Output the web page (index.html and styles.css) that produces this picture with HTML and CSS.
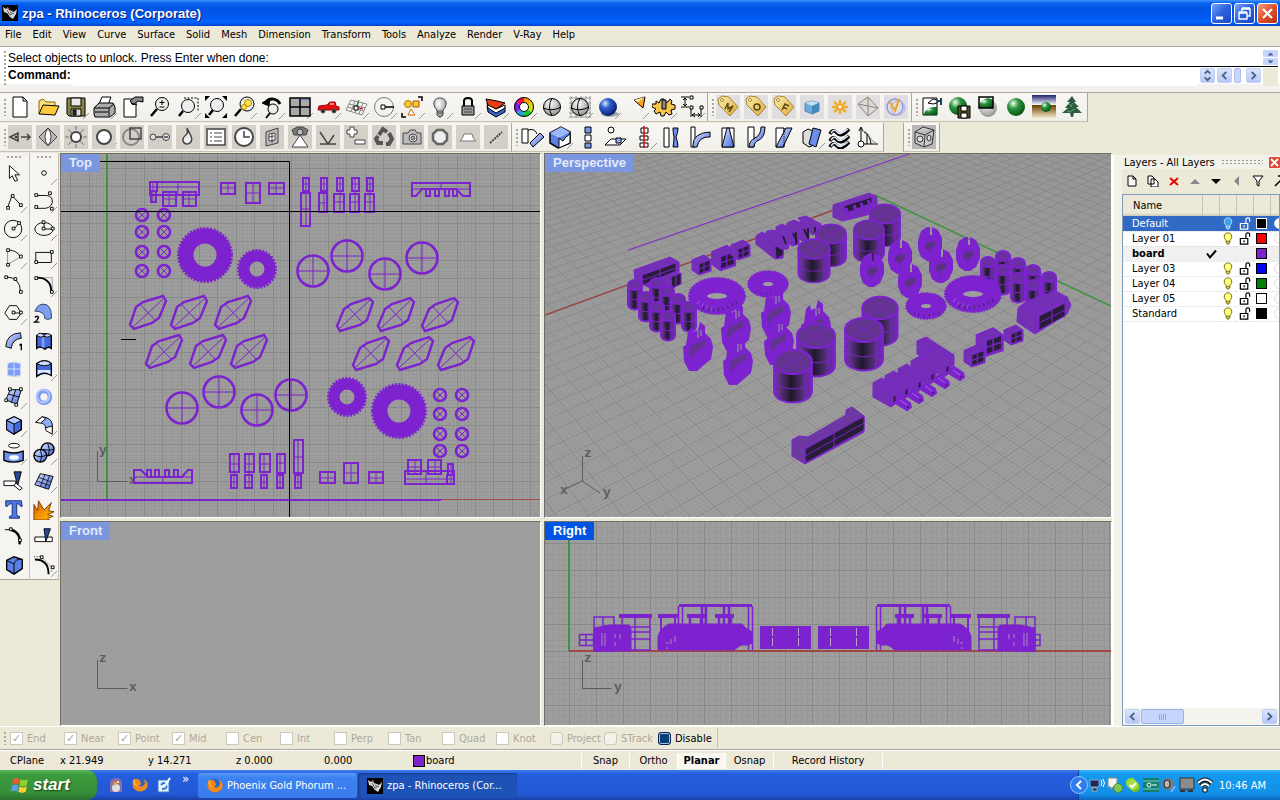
FILE: index.html
```html
<!DOCTYPE html>
<html lang="en">
<head>
    <meta charset="UTF-8">
    <meta name="viewport" content="width=device-width, initial-scale=1.0">
    <title>zpa - Rhinoceros (Corporate)</title>
    <link rel="stylesheet" href="styles.css">
</head>
<body>

    <!-- shared gradients and symbols -->
    <svg class="defs" width="0" height="0" aria-hidden="true">
        <defs>
            <linearGradient id="gBlue" x1="0" y1="0" x2="1" y2="1"><stop offset="0" stop-color="#dbe6ff"/><stop offset="1" stop-color="#4468dd"/></linearGradient>
            <radialGradient id="gBall" cx=".35" cy=".3" r=".75"><stop offset="0" stop-color="#dfe9ff"/><stop offset=".35" stop-color="#2f5fd0"/><stop offset="1" stop-color="#021a66"/></radialGradient>
            <radialGradient id="gGreen" cx=".35" cy=".3" r=".75"><stop offset="0" stop-color="#f0fff0"/><stop offset=".4" stop-color="#2b9440"/><stop offset="1" stop-color="#04520f"/></radialGradient>
            <radialGradient id="gGray" cx=".4" cy=".3" r=".75"><stop offset="0" stop-color="#fff"/><stop offset="1" stop-color="#8c8c8c"/></radialGradient>
            <linearGradient id="gTag" x1="0" y1="0" x2="1" y2="1"><stop offset="0" stop-color="#fff0b0"/><stop offset="1" stop-color="#d9a83a"/></linearGradient>
            <linearGradient id="gFire" x1="0" y1="0" x2="1" y2="1"><stop offset="0" stop-color="#e85a00"/><stop offset="1" stop-color="#ffc400"/></linearGradient>
            <linearGradient id="gSky" x1="0" y1="0" x2="0" y2="1"><stop offset="0" stop-color="#1b2070"/><stop offset=".42" stop-color="#fff"/><stop offset=".43" stop-color="#6b4400"/><stop offset="1" stop-color="#fff6e0"/></linearGradient>
            <linearGradient id="gCyl" x1="0" x2="1"><stop offset="0" stop-color="#7a22cc"/><stop offset=".12" stop-color="#63348f"/><stop offset=".45" stop-color="#1e1828"/><stop offset=".8" stop-color="#5a3183"/><stop offset="1" stop-color="#7a22cc"/></linearGradient>

            <symbol id="rhino" viewBox="0 0 16 16"><rect width="16" height="16" fill="#000"/><path d="M1 2l3 2 2-2 1 3 3 1 2 1 3-3-1 5-3 5-3-2-3-4-3-1z" fill="#d8d8d8"/><path d="M5 5l3 5 2-1M8 7l4 2" stroke="#555" fill="none"/><path d="M5 3l2 1" stroke="#c33"/></symbol>
            <symbol id="firefox" viewBox="0 0 16 16"><circle cx="8" cy="8" r="7" fill="#2b62c4"/><path d="M4 2c2 0 5 1 4 3 2 1 1 3-1 3 2 3 5 1 6-2 0-2-1-3-2-4 5 1 6 7 3 10-4 4-11 3-13-2C0 7 1 3 2 2z" fill="#f08a1c"/><path d="M2 3c0 3 1 5 3 6" stroke="#ffd24a" fill="none"/></symbol>
            <symbol id="bulb" viewBox="0 0 12 14"><path d="M4 9C1 7 1 1 6 1s5 6 2 8v3H4z" stroke="currentColor"/><path d="M4 10h4M5 13h2" stroke="currentColor" fill="none"/></symbol>
            <symbol id="lock" viewBox="0 0 12 14"><path d="M1 7h8v6H1zM7 7V3q0-2 2-2t2 2v2M5 9v2" fill="none" stroke="currentColor" stroke-width="1.3"/></symbol>

            <!-- plan view parts -->
            <g id="cap"><circle r="6" stroke-width="2.6"/><path class="thin" d="M-4-4l8 8M4-4l-8 8"/></g>
            <g id="ring"><circle r="15.5" stroke-width="2.6"/><path class="thin" d="M-15 0h30M0-15v30"/></g>
            <g id="fuse"><path d="M-18 12l6-18 7-5 20-6 3 5-7 17-7 5-18 6z" stroke-width="2.4"/><path class="thin" d="M-15 14L15-14M-8-9l16 17"/></g>
            <g id="gearBig"><circle r="19" stroke-width="15"/><circle r="26.5" stroke-width="3" stroke-dasharray="2 1.4"/></g>
            <g id="gearSmall"><circle r="13" stroke-width="11"/><circle r="18.5" stroke-width="3" stroke-dasharray="2 1.4"/></g>
            <g id="halfBoard">
                <path stroke-width="2" d="M150 182h49v13h-49zM150 182h7v9h-7zM151 191h5v11h-5zM163 192h13v14h-13zM183 192h13v14h-13zM221 183h14v11h-14zM246 183h14v20h-14zM269 183h15v11h-15z"/>
                <path class="thin" d="M153 182v20M150 187h49M178 182v13M163 199h13M183 199h13M169 192v14M189 192v14M221 188h14M228 183v11M246 193h14M253 183v20M269 188h15M276 183v11"/>
                <path stroke-width="2" d="M303 178h6v13h-6zM321 178h6v13h-6zM337 178h6v13h-6zM352 178h7v13h-7zM367 178h6v13h-6zM301 193h9v33h-9zM319 193h8v19h-8zM334 194h10v18h-10zM350 194h9v18h-9zM365 194h9v18h-9z"/>
                <path class="thin" d="M303 184h6M321 184h6M337 184h6M352 184h7M367 184h6M306 178v48M324 178v34M340 178v34M355 178v34M370 178v34M301 209h9M319 203h8M334 202h10M350 202h9M365 202h9"/>
                <path stroke-width="2" d="M412 183h58v13h-7l-7-7h-34l-6 7h-4z"/>
                <path class="thin" d="M412 189h58M441 183v6"/>
                <path stroke-width="2" d="M426 190v6h4v-6M435 190v6h4v-6M445 190v6h4v-6M453 190v6h4v-6"/>
                <use href="#cap" x="142" y="215"/><use href="#cap" x="164" y="215"/>
                <use href="#cap" x="142" y="232"/><use href="#cap" x="164" y="232"/>
                <use href="#cap" x="142" y="252"/><use href="#cap" x="164" y="252"/>
                <use href="#cap" x="142" y="271"/><use href="#cap" x="164" y="271"/>
                <use href="#gearBig" x="205" y="255"/><use href="#gearSmall" x="257" y="269"/>
                <use href="#ring" x="313" y="271"/><use href="#ring" x="347" y="256"/><use href="#ring" x="385" y="274"/><use href="#ring" x="422" y="258"/>
                <use href="#fuse" x="148" y="313"/><use href="#fuse" x="189" y="313"/><use href="#fuse" x="233" y="313"/>
                <use href="#fuse" x="164" y="352"/><use href="#fuse" x="208" y="352"/><use href="#fuse" x="249" y="352"/>
            </g>

            <!-- perspective parts, origin at the middle of the top face -->
            <g id="can"><path d="M-19 0v30c2 14 36 14 38 0V0" fill="url(#gCyl)" stroke-width="1.8"/><path d="M-19 17c4 13 34 13 38 0M12 8v30" fill="none"/><ellipse rx="19" ry="12" fill="#63348f" stroke-width="2.2"/><path d="M-14-8L14 8M13-8L-13 8" fill="none" stroke-width=".8"/></g>
            <g id="capsule"><path d="M-7 0v20c2 6 12 6 14 0V0" fill="url(#gCyl)" stroke-width="2"/><path d="M-7 11c3 5 11 5 14 0M3 5v18" fill="none"/><ellipse rx="7" ry="5" fill="#6a2fa3" stroke-width="2"/></g>
            <g id="fin"><path d="M-15 0l3-2 2-14 4-4 1 5 5-2 2-8 5 4v7l6 6 2 8-2 12-14 12-8 0-5-10z" fill="#7c22ce" stroke="none"/><path d="M-9 7L-7-1 4-6 7-8v7L-3 5l-4 6z" fill="#63348f" stroke="none"/><path d="M0-9v-8M3-11v-6" stroke="#9e9e9e"/></g>
            <g id="disc"><path d="M-12-4l3-9 6-4 3 0v8h2v-8l6 3 4 8v10l-4 9-6 4-5 0-6-4-3-8z" fill="#7c22ce" stroke="none"/><path d="M-5 0l4-2V-5l2 3 4-1v5L1 4l-1 7-1-6-4 0z" fill="#5a3183" stroke="none"/></g>
            <g id="torusBig"><ellipse rx="28" ry="18" fill="#7c22ce" stroke-width="2" stroke-dasharray="2 1"/><ellipse rx="10" ry="3" fill="#9e9e9e" stroke="none"/><path d="M-19 6q7 6 18 7" fill="none" stroke="#9a55dc" stroke-width="4" stroke-dasharray="1 4"/><path d="M-14 12q18 6 37-8" fill="none" stroke="#45266b" stroke-width="4" stroke-dasharray="1 4"/></g>
            <g id="torusSmall"><ellipse rx="20" ry="13" fill="#7c22ce" stroke-width="1.5" stroke-dasharray="2 1"/><ellipse rx="5" ry="2" fill="#9e9e9e" stroke="none"/><path d="M-12 7q12 6 25-1" fill="none" stroke="#45266b" stroke-width="2" stroke-dasharray="1 4"/></g>
            <g id="block"><path d="M-9-5l12-5 7 5V6L-2 10l-7-5z" fill="#7330b4"/><path d="M-2-1l11-4V5L-2 9z" fill="#281d36"/><path d="M-2 4l11-4M3-3V7" fill="none"/></g>
            <g id="pin"><path d="M-19-13l9-5L6-6v12l-7 5-18-10z" fill="#7330b4"/><path d="M-16-10L2 1M-12-14L3-4M-1 0v10" fill="none" stroke-width=".8"/><path d="M1 1l3-2v6l-3 2z" fill="#281d36"/><path d="M5 4l4-3 9 6 1 4-4 3-10-6z" fill="#7c22ce" stroke-width="2"/><path d="M8 4l7 5" stroke="#a06ae0"/><path d="M15 11h2" stroke="#281d36"/></g>
        </defs>
    </svg>

    <header class="title-bar">
        <svg class="app-icon"><use href="#rhino"/></svg>
        <h1>zpa - Rhinoceros (Corporate)</h1>
        <button class="win-btn" aria-label="Minimize"><svg viewBox="0 0 19 19"><path d="M4 14h7" stroke="#fff" stroke-width="3"/></svg></button>
        <button class="win-btn" aria-label="Restore"><svg viewBox="0 0 19 19"><path d="M7 7V5h8v7h-3M7 4h8M4 9h8v6H4zM4 8h8" stroke="#fff" stroke-width="1.4" fill="none"/></svg></button>
        <button class="win-btn close" aria-label="Close"><svg viewBox="0 0 19 19"><path d="M5 5l9 9M14 5l-9 9" stroke="#fff" stroke-width="2.2"/></svg></button>
    </header>

    <nav class="menu-bar">
        <a href="#">File</a><a href="#">Edit</a><a href="#">View</a><a href="#">Curve</a><a href="#">Surface</a><a href="#">Solid</a><a href="#">Mesh</a><a href="#">Dimension</a><a href="#">Transform</a><a href="#">Tools</a><a href="#">Analyze</a><a href="#">Render</a><a href="#">V-Ray</a><a href="#">Help</a>
    </nav>

    <section class="command">
        <i class="grip"></i>
        <div class="command-lines">
            <div class="history">
                <p>Select objects to unlock. Press Enter when done:</p>
                <span class="spin"><button aria-label="Scroll up"><svg viewBox="0 0 8 4"><path d="M2 3l2-2 2 2z" fill="#4d6185"/></svg></button><button aria-label="Scroll down"><svg viewBox="0 0 8 4"><path d="M2 1l2 2 2-2z" fill="#4d6185"/></svg></button></span>
            </div>
            <div class="prompt">
                <label for="cmd">Command:</label>
                <input id="cmd" type="text">
                <button class="sb" aria-label="Lines"><svg viewBox="0 0 14 14"><path d="M4 5l3-3 3 3M4 9l3 3 3-3" stroke="#4d6185" stroke-width="2" fill="none"/></svg></button>
                <button class="sb" aria-label="Left"><svg viewBox="0 0 14 14"><path d="M9 3L5 7l4 4" stroke="#4d6185" stroke-width="2" fill="none"/></svg></button>
                <i class="thumb"></i>
                <button class="sb" aria-label="Right"><svg viewBox="0 0 14 14"><path d="M5 3l4 4-4 4" stroke="#4d6185" stroke-width="2" fill="none"/></svg></button>
                <i class="corner"></i>
            </div>
        </div>
    </section>

    <div class="toolbars">
        <div class="bar">
            <div class="tools">
                <i class="grip"></i>
                <button aria-label="New"><svg viewBox="0 0 24 24"><path d="M5 2h10l4 4v16H5zM15 2v4h4" fill="#fff"/></svg></button>
                <button aria-label="Open"><svg viewBox="0 0 24 24"><path d="M3 19V6l4-2 3 3h9v4" fill="#ffe27a" stroke="#8a6500"/><path d="M3 19l4-9 16 1-4 9z" fill="#ffc83d"/></svg></button>
                <button class="fly" aria-label="Save"><svg viewBox="0 0 24 24"><path d="M3 3h18v18H5l-2-2z" fill="#8a8446"/><path d="M7 3h10v8H7z" fill="#e8e8e8"/><path d="M7 14h10v7H7z" fill="#ddd"/><path d="M9 15h3v5H9z" fill="#333"/></svg></button>
                <button class="fly" aria-label="Print"><svg viewBox="0 0 24 24"><path d="M7 9l3-7h9l-3 8z" fill="#fff"/><path d="M2 13l5-5h14l2 4v6l-5 4H3l-1-3z" fill="#aaa"/><path d="M2 13h15l5-4M3 17h13M17 13v8" fill="none"/></svg></button>
                <button aria-label="Properties"><svg viewBox="0 0 24 24"><path d="M4 4h12v18H4z" fill="#fff"/><path d="M10 6l5-4h8v5l-5-1-5 4z" fill="#888"/><path d="M11 8l6 2"/></svg></button>
                <button aria-label="Zoom"><svg viewBox="0 0 24 24"><circle cx="14" cy="9" r="6.5" fill="#eee"/><path d="M9 14l-6 7" stroke-width="2.5"/><path d="M14 5v5M11.5 7.5h5M11.5 12h5"/></svg></button>
                <button class="fly" aria-label="Zoom window"><svg viewBox="0 0 24 24"><path d="M8 3h14v14" stroke-dasharray="2 1.5" fill="none"/><circle cx="12" cy="11" r="6.5" fill="#eee"/><path d="M7 16l-4 5" stroke-width="2.5"/></svg></button>
                <button aria-label="Zoom extents"><svg viewBox="0 0 24 24"><circle cx="13" cy="10" r="6.5" fill="#eee"/><path d="M9 15l-4 5" stroke-width="2.5"/><path d="M1 1h5L1 6zM23 1v5l-5-5zM23 23h-5l5-5zM1 23v-5l5 5z" fill="#000" stroke="none"/></svg></button>
                <button class="fly" aria-label="Zoom selected"><svg viewBox="0 0 24 24"><circle cx="15" cy="9" r="7" fill="#eee"/><circle cx="16" cy="8" r="3.5" fill="#ffe14a" stroke="#b98c00"/><circle cx="12" cy="12" r="2.5" fill="#ffe14a" stroke="#b98c00"/><path d="M9 14l-6 7" stroke-width="2.5"/></svg></button>
                <button class="fly" aria-label="Undo view"><svg viewBox="0 0 24 24"><path d="M20 9C17 3 10 3 7 6" stroke-width="3" fill="none"/><path d="M2 8l8-5-1 8z" fill="#000"/><circle cx="13" cy="14" r="5" fill="#eee"/><path d="M10 18l-4 5" stroke-width="2"/></svg></button>
                <button class="fly" aria-label="Four views"><svg viewBox="0 0 24 24"><path d="M2 3h20v18H2z" fill="#aaa" stroke-width="1.5"/><path d="M12 3v18M2 12h20" stroke-width="1.5"/><path d="M12 4h9" stroke="#2848a0"/></svg></button>
                <button class="fly" aria-label="Right view"><svg viewBox="0 0 24 24"><path d="M2 15l1-4 8-1 3-3h5l1 4 3 1v3z" fill="#e01010" stroke="#a00"/><circle cx="7" cy="16" r="2" fill="#222" stroke="#555"/><circle cx="18" cy="16" r="2" fill="#222" stroke="#555"/><path d="M14 9h4" stroke="#fff"/></svg></button>
                <button class="fly" aria-label="Set CPlane"><svg viewBox="0 0 24 24"><path d="M7 5l16 4-5 11-16-5zM11 6L7 17M15 7l-4 11M19 8l-4 11M5 9l16 4M4 12l16 4" fill="none" stroke="#888"/><path d="M12 12l3-7" stroke="#080"/><path d="M12 12l7 2" stroke="#c00"/><path d="M10 11h4v4h-4z" fill="#fff"/></svg></button>
                <button class="fly" aria-label="Circle"><svg viewBox="0 0 24 24"><circle cx="12" cy="12" r="9.5" fill="none" stroke="#777"/><path d="M9 10h4v4H9z" fill="#fff"/><path d="M13 12h9" stroke-width="1.5"/></svg></button>
                <button class="fly" aria-label="Object snap"><svg viewBox="0 0 24 24"><path d="M18 2h4v4M2 18v4h4" fill="none" stroke-width="1.5"/><circle cx="8" cy="9" r="3.5" fill="#ffc62e" stroke="#a70"/><path d="M13 6h6v6h-6z" fill="#ffc62e" stroke="#a50"/><path d="M11 14l4 6H8z" fill="#fff" stroke="#c60"/></svg></button>
                <button class="fly" aria-label="Hide"><svg viewBox="0 0 24 24"><path d="M9 15C4 10 5 3 12 3s8 7 3 12v5l-2 2h-2l-2-2z" fill="url(#gGray)" stroke="#444"/><path d="M9 16h6M9 18h6" stroke="#444"/></svg></button>
                <button class="fly" aria-label="Lock"><svg viewBox="0 0 24 24"><path d="M8 11V6q0-3 4-3t4 3v5" fill="none" stroke-width="2"/><path d="M6 11h12v9H6z" fill="#999"/><path d="M8 14h8M8 17h8" stroke="#444"/></svg></button>
                <button class="fly" aria-label="Layers"><svg viewBox="0 0 24 24"><path d="M3 11l9 6 9-5v5l-9 5-8-5z" fill="#3862cc"/><path d="M3 8l9 6 9-4v3l-9 5-8-5z" fill="#fff"/><path d="M2 4l11 2 8 2-9 6-8-4z" fill="#f03c14"/></svg></button>
                <button class="fly" aria-label="Colors"><svg viewBox="0 0 24 24"><g fill="none" stroke-width="5"><path d="M12 5a7 7 0 0 1 6 3" stroke="#ff9c00"/><path d="M18 8a7 7 0 0 1 0 8" stroke="#d8e000"/><path d="M18 16a7 7 0 0 1-6 3" stroke="#18c830"/><path d="M12 19a7 7 0 0 1-6-3" stroke="#20a0e0"/><path d="M6 16a7 7 0 0 1 0-8" stroke="#8020e0"/><path d="M6 8a7 7 0 0 1 6-3" stroke="#f01050"/></g><circle cx="12" cy="12" r="9.5" fill="none"/><circle cx="12" cy="12" r="4.5" fill="#fff"/></svg></button>
                <button aria-label="Shade"><svg viewBox="0 0 24 24"><circle cx="12" cy="12" r="8.5" fill="url(#gGray)"/><path d="M12 3q-5 9 0 18M3 13q9 4 18-1" fill="none"/></svg></button>
                <button class="fly" aria-label="Shaded viewport"><svg viewBox="0 0 24 24"><path d="M1 3h22M1 8h22M1 13h22M1 18h22M1 22h22M3 1v22M8 1v22M13 1v22M18 1v22M22 1v22" stroke="#888" stroke-width=".8"/><circle cx="12" cy="12" r="8.5" fill="url(#gGray)"/><path d="M12 3q-5 9 0 18M3 13q9 4 18-1" fill="none"/></svg></button>
                <button class="fly" aria-label="Render"><svg viewBox="0 0 24 24"><ellipse cx="14" cy="19" rx="9" ry="3" fill="#aaa" stroke="none"/><circle cx="12" cy="12" r="9" fill="url(#gBall)" stroke="none"/></svg></button>
                <button class="fly" aria-label="Spotlight"><svg viewBox="0 0 24 24"><path d="M10 5l11-3-2 11z" fill="#ffa21c"/><path d="M10 5l11-3-7 5z" fill="#fff3b0" stroke="none"/></svg></button>
                <button class="fly" aria-label="Options"><svg viewBox="0 0 24 24"><path d="M4 6l3 2 2-4h3v3h4l2-3 2 2-1 3 4 1v4l-4 1 1 4-3 1-3-3-2 4h-3l-1-4-4 2-2-3 2-2-4-2V9h4z" fill="#f4c64a"/><path d="M10 5h4v9h-4z" fill="#888"/></svg></button>
                <button class="fly" aria-label="Dimensions"><svg viewBox="0 0 24 24"><path d="M1 2h8M1 12h8M5 3v8M3 5l2-2 2 2M3 9l2 2 2-2M11 14v8M21 14v8M12 20h8M15 18l-3 2 3 2M18 18l2 2-2 2" fill="none"/><path d="M10 1h3v3h-3zM10 11h3v3h-3zM20 11h3v3h-3z" fill="#fff"/></svg></button>
            </div>
            <div class="tools tinted">
                <i class="grip"></i>
                <button aria-label="V-Ray materials"><svg viewBox="0 0 24 24"><path d="M2 4l4-3 7 1 9 10-8 9L3 10z" fill="url(#gTag)" stroke="#a8842a"/><circle cx="6" cy="5" r="1.5" fill="#fff" stroke="#a8842a"/><path d="M9 14l3-6v6l5-3-4 6" fill="none" stroke="#5c4810" stroke-width="1.5"/></svg></button>
                <button aria-label="V-Ray options"><svg viewBox="0 0 24 24"><path d="M2 4l4-3 7 1 9 10-8 9L3 10z" fill="url(#gTag)" stroke="#a8842a"/><circle cx="6" cy="5" r="1.5" fill="#fff" stroke="#a8842a"/><circle cx="13" cy="12" r="3" fill="none" stroke="#5c4810" stroke-width="1.5"/></svg></button>
                <button aria-label="V-Ray frame buffer"><svg viewBox="0 0 24 24"><path d="M2 4l4-3 7 1 9 10-8 9L3 10z" fill="url(#gTag)" stroke="#a8842a"/><circle cx="6" cy="5" r="1.5" fill="#fff" stroke="#a8842a"/><path d="M10 15l3-6 4 2M11 12l4 2" fill="none" stroke="#5c4810" stroke-width="1.5"/></svg></button>
                <button aria-label="Proxy"><svg viewBox="0 0 24 24"><path d="M5 8l7-2 7 2v8l-7 3-7-3z" fill="#6fa9d6" stroke="#5287b5"/><path d="M5 8l7-2 7 2-7 3z" fill="#bfe0f5" stroke="none"/><path d="M12 11v8l7-3V8z" fill="#4889bd" stroke="none"/></svg></button>
                <button aria-label="Sun"><svg viewBox="0 0 24 24"><path d="M12 5v14M4 12h16M6 7l12 10M18 7L6 17" stroke="#f0ac28" stroke-width="2.5"/><circle cx="12" cy="12" r="2" fill="#fff" stroke="#f0ac28"/></svg></button>
                <button aria-label="Infinite plane"><svg viewBox="0 0 24 24"><path d="M2 9L12 2l10 11-10 8zM2 9l20 4M12 2v19" fill="#dddbd8" stroke="#8c8878"/></svg></button>
                <button aria-label="V-Ray"><svg viewBox="0 0 24 24"><circle cx="11" cy="12" r="8" fill="none" stroke="#8e98dc" stroke-width="1.5"/><circle cx="14" cy="13" r="7" fill="none" stroke="#aab2ea"/><path d="M6 7l5 9 4-12" stroke="#f0a520" stroke-width="2" fill="none"/></svg></button>
            </div>
            <div class="tools">
                <i class="grip"></i>
                <button aria-label="Material editor"><svg viewBox="0 0 24 24"><path d="M3 3h14v17H3z" fill="#fff"/><path d="M4 20q1-9 13-8v8z" fill="url(#gGreen)" stroke="none"/><path d="M8 8l5-4 4 1v3l-4 1z" fill="#fff"/><path d="M17 6h4V3v7" stroke="#146" stroke-width="2" fill="none"/></svg></button>
                <button aria-label="Save material"><svg viewBox="0 0 24 24"><circle cx="10" cy="11" r="9" fill="url(#gGreen)" stroke="none"/><path d="M10 11h12v12H10z" fill="#555522"/><path d="M13 11h6v5h-6zM13 18h6v5h-6z" fill="#fff"/></svg></button>
                <button aria-label="Region render"><svg viewBox="0 0 24 24"><circle cx="12" cy="13" r="9" fill="url(#gGray)" stroke="none"/><path d="M3 3h14v10H3z" fill="#fff" stroke="none"/><path d="M3 13a9 9 0 0 1 14-8v8z" fill="url(#gGreen)" stroke="none"/><path d="M3 2h14v11H3z" fill="none" stroke-width="1.5"/></svg></button>
                <button aria-label="Render sphere"><svg viewBox="0 0 24 24"><circle cx="12" cy="12" r="9" fill="url(#gGreen)" stroke="none"/></svg></button>
                <button aria-label="Environment"><svg viewBox="0 0 24 24"><path d="M0 0h24v24H0z" fill="url(#gSky)" stroke="none"/><circle cx="14" cy="12" r="5" fill="url(#gGreen)" stroke="none"/></svg></button>
                <button aria-label="Tree"><svg viewBox="0 0 24 24"><path d="M12 1l4 6h-2l5 5h-3l6 6h-8l-1 4h-2l-1-4H2l6-5H5l5-6H7z" fill="#2d5c40" stroke="none"/><path d="M9 9l3 3M15 14l-4 2M7 16l4 1M13 8l-2 3" stroke="#6f9a80"/></svg></button>
            </div>
        </div>
        <div class="bar">
            <div class="tools gray">
                <i class="grip"></i>
                <button aria-label="Show view"><svg viewBox="0 0 24 24"><path d="M2 12l8-4v8zM13 12h9M19 9l3 3-3 3" fill="none" stroke-width="1.5"/><circle cx="8" cy="12" r="1"/></svg></button>
                <button aria-label="Diamond"><svg viewBox="0 0 24 24"><path d="M3 12l9-9 9 9-9 9z" fill="#bbb"/><path d="M12 3q-6 9 0 18 6-9 0-18" fill="#fff"/></svg></button>
                <button aria-label="Sun light"><svg viewBox="0 0 24 24"><circle cx="12" cy="12" r="5" fill="#fff" stroke-width="2"/><path d="M12 1v4M12 19v4M1 12h4M19 12h4M4 4l4 4M16 16l4 4M20 4l-4 4M8 16l-4 4" stroke="#777"/></svg></button>
                <button class="fly" aria-label="Ring"><svg viewBox="0 0 24 24"><circle cx="12" cy="12" r="7" fill="#fff" stroke-width="2"/></svg></button>
                <button aria-label="Overlap"><svg viewBox="0 0 24 24"><circle cx="11" cy="12" r="8" fill="none" stroke="#888" stroke-width="2"/><path d="M10 3h11v11H10z" fill="none" stroke-width="1.5"/></svg></button>
                <button aria-label="Link"><svg viewBox="0 0 24 24"><circle cx="5" cy="12" r="3" fill="#ddd"/><circle cx="18" cy="12" r="3.5" fill="#ddd"/><path d="M8 12h7M16 12h4" stroke-width="1.5"/></svg></button>
                <button aria-label="Drop"><svg viewBox="0 0 24 24"><path d="M11 3q2 4 4 8c4 9-9 11-8 3q1-3 4-5 1-2 0-6z" fill="#eee" stroke-width="1.5"/></svg></button>
                <button aria-label="List"><svg viewBox="0 0 24 24"><path d="M3 4h18v16H3z" fill="#fff" stroke-width="1.5"/><path d="M6 8h2M10 8h8M6 12h2M10 12h8M6 16h2M10 16h8"/></svg></button>
                <button aria-label="Clock"><svg viewBox="0 0 24 24"><circle cx="12" cy="12" r="9" fill="#fff" stroke-width="2"/><path d="M12 6v6h6" fill="none" stroke-width="1.5"/></svg></button>
                <button aria-label="Panel"><svg viewBox="0 0 24 24"><path d="M6 7l12-4v15L6 21z" fill="#bbb"/><path d="M9 9l6-1v7l-6 1z" fill="#fff"/><path d="M9 12l5-1M12 9v9"/></svg></button>
                <button aria-label="Camera view"><svg viewBox="0 0 24 24"><path d="M4 5l5-3h6l5 3-2 5H6z" fill="#777"/><circle cx="12" cy="7" r="3" fill="#bbb"/><path d="M12 10l8 12H4z" fill="#fff"/></svg></button>
                <button aria-label="Angle"><svg viewBox="0 0 24 24"><path d="M4 7l8 12 6-9M4 19h16" fill="none" stroke-width="1.5"/></svg></button>
                <button aria-label="Add remove"><svg viewBox="0 0 24 24"><path d="M6 2h4v3h3v4h-3v3H6V9H3V5h3z" fill="#fff"/><path d="M11 15h10v4H11z" fill="#fff"/></svg></button>
                <button aria-label="Recycle"><svg viewBox="0 0 24 24"><g fill="none" stroke="#555" stroke-width="4"><path d="M7 10l4-6 4 3"/><path d="M17 8l3 6-3 5h-3"/><path d="M11 18H6l-2-4 2-3"/></g></svg></button>
                <button aria-label="Camera"><svg viewBox="0 0 24 24"><path d="M3 8h5l2-3h5l2 3h4v11H3z" fill="#bbb"/><circle cx="13" cy="13" r="4" fill="#eee"/><circle cx="13" cy="13" r="2" fill="#aaa"/></svg></button>
                <button aria-label="Octagon"><svg viewBox="0 0 24 24"><path d="M9 5h6l4 4v6l-4 4H9l-4-4V9z" fill="#eee" stroke="#666" stroke-width="2.5"/></svg></button>
                <button aria-label="Half"><svg viewBox="0 0 24 24"><path d="M4 16q2-1 4-7h8q1 6 4 7z" fill="#fff" stroke="#777"/></svg></button>
                <button aria-label="Line"><svg viewBox="0 0 24 24"><path d="M6 18L18 7" stroke-width="2" stroke-dasharray="2 1"/></svg></button>
            </div>
            <div class="tools shapes">
                <i class="grip"></i>
                <button aria-label="Move"><svg viewBox="0 0 24 24"><path d="M2 4h6v14H2z" fill="#fff"/><path d="M10 18L20 8l4 4-11 10z" fill="url(#gBlue)"/><path d="M8 5q7-2 9 4" fill="none"/></svg></button>
                <button class="fly" aria-label="Box edit"><svg viewBox="0 0 24 24"><path d="M2 8l11-6 9 5v11l-12 5-8-5z" fill="#5c80e8" stroke-width="1.5"/><path d="M2 8l11-6 9 5-11 6z" fill="#9bb8fa" stroke="none"/><path d="M11 13l4 3 3-4 4-3v9l-11 5z" fill="#fff"/></svg></button>
                <button aria-label="Array"><svg viewBox="0 0 24 24"><path d="M9 2h6v6H9z" fill="#7898f0"/><path d="M9 10h6v6H9z" fill="#fff"/><path d="M9 18h6v5H9z" fill="#7898f0"/></svg></button>
                <button aria-label="Project"><svg viewBox="0 0 24 24"><circle cx="7" cy="5" r="3" fill="#fff"/><path d="M1 20l6-6h15l-6 6z" fill="#fff"/><path d="M12 13h5v5h-5z" fill="#8fb0ff"/></svg></button>
                <button class="fly" aria-label="Align"><svg viewBox="0 0 24 24"><path d="M9 3h7v5H9zM8 11h8v4H8zM8 18h8v4H8z" fill="#fff"/><path d="M12 1v22" stroke="#e00000" stroke-width="1.5"/></svg></button>
                <button aria-label="Twist"><svg viewBox="0 0 24 24"><path d="M4 3h5v19H4z" fill="#fff"/><path d="M13 3h5q0 5-2 9 2 5 2 10h-5q1-5 1-10-1-4-1-9z" fill="#6a8cec"/></svg></button>
                <button aria-label="Bend"><svg viewBox="0 0 24 24"><path d="M3 2h4v20H3z" fill="#fff"/><path d="M5 20q0-12 17-13v5Q11 11 9 22H5z" fill="url(#gBlue)"/></svg></button>
                <button aria-label="Taper"><svg viewBox="0 0 24 24"><path d="M6 3h12v19H6z" fill="#fff"/><path d="M11 3h2l5 19H6z" fill="url(#gBlue)"/></svg></button>
                <button aria-label="Flow"><svg viewBox="0 0 24 24"><path d="M4 2h6v20H4z" fill="#fff"/><path d="M5 22q0-6 6-9t6-11h4q0 10-6 13-5 2-5 7z" fill="url(#gBlue)"/></svg></button>
                <button aria-label="Shear"><svg viewBox="0 0 24 24"><path d="M4 3h8v19H4z" fill="#fff"/><path d="M4 22L14 3h6l-9 19z" fill="url(#gBlue)"/><path d="M12 3v19" stroke-dasharray="1 1"/></svg></button>
                <button class="fly" aria-label="Rotate"><svg viewBox="0 0 24 24"><path d="M3 7l5-3 5 2-1 15-3 1-6-4z" fill="#ddd"/><path d="M13 3l8 2-5 17-7-3z" fill="#6a8cec"/></svg></button>
                <button aria-label="Smooth"><svg viewBox="0 0 24 24"><g fill="none"><path d="M2 9q3-6 7-1t12-4M2 16q3-6 7-1t12-4M2 22q3-6 7-1t12-4" stroke-width="3.5"/><path d="M3 8q3-5 6-1t11-3M3 15q3-5 6-1t11-3M3 21q3-5 6-1t11-3" stroke="#dfe6f8" stroke-width="1.5"/></g></svg></button>
                <button aria-label="Graph"><svg viewBox="0 0 24 24"><path d="M5 17V3M3 6l2-4 2 4M8 19h14M8 7q6 3 7 12M11 9v10" fill="none"/><path d="M6 6q5 0 7 5t8 8" fill="none" stroke="#888"/><circle cx="5" cy="19" r="3" fill="#fff"/></svg></button>
            </div>
            <div class="tools lone">
                <i class="grip"></i>
                <button aria-label="Dice"><svg viewBox="0 0 24 24"><path d="M3 7l8-5 11 3-2 14-8 3-9-4zM3 7l10 3 9-5M13 10l-1 12" fill="#c8c8c8" stroke="#333"/><circle cx="8" cy="14" r="3" fill="#ddd" stroke="#333"/><ellipse cx="17" cy="13" rx="2" ry="3" fill="#ddd" stroke="#333"/></svg></button>
            </div>
        </div>
    </div>

    <main class="workspace">
        <aside class="side-tools">
            <div class="side-col">
                <i class="grip flat"></i>
                <button aria-label="Select"><svg viewBox="0 0 24 24"><path d="M7 4v14l3-3 3 6 3-1-3-6h5z" fill="#fff"/></svg></button>
                <button class="fly" aria-label="Polyline"><svg viewBox="0 0 24 24"><path d="M5 19L10 6l9 10" fill="none"/><path d="M4 18h3v3H4zM9 5h3v3H9zM18 15h3v3h-3z" fill="#fff"/></svg></button>
                <button class="fly" aria-label="Circle"><svg viewBox="0 0 24 24"><circle cx="11" cy="12" r="9.5" fill="none"/><path d="M12 12l6-7"/><path d="M10 10h3v3h-3zM16 4h3v3h-3z" fill="#fff"/></svg></button>
                <button class="fly" aria-label="Arc"><svg viewBox="0 0 24 24"><path d="M5 4v16l14-8" fill="none" stroke="#888"/><path d="M5 4q11 1 14 8" fill="none"/><path d="M4 3h3v3H4zM4 19h3v3H4zM18 10h3v3h-3z" fill="#fff"/></svg></button>
                <button aria-label="Curve"><svg viewBox="0 0 24 24"><path d="M3 3q16 1 16 16" fill="none"/><path d="M2 2h3v3H2zM12 4h3v3h-3zM18 18h3v3h-3z" fill="#fff"/></svg></button>
                <button class="fly" aria-label="Polygon"><svg viewBox="0 0 24 24"><path d="M2 12l5-8h8l5 8-5 7H7zM12 12h8" fill="none"/><path d="M10 10h3v3h-3zM18 10h3v3h-3z" fill="#fff"/></svg></button>
                <button aria-label="Fillet one"><svg viewBox="0 0 24 24"><path d="M3 18Q4 4 19 3l1 6q-10 1-11 11z" fill="url(#gBlue)"/><path d="M20 15v7M18 17l2-2" fill="none" stroke-width="1.5"/></svg></button>
                <button aria-label="Surface corners"><svg viewBox="0 0 24 24"><path d="M5 6q6-3 14 0v13q-7 2-14 0z" fill="#7d9cf2" stroke="#c8d6ff"/><path d="M12 5v15M5 12h14" stroke="#dfe8ff"/></svg></button>
                <button class="fly" aria-label="Patch"><svg viewBox="0 0 24 24"><path d="M8 4h12l-5 16-12-5z" fill="url(#gBlue)"/><path d="M14 4L9 18M6 9l12 3"/><path d="M6 2h3v3H6zM18 2h3v3h-3zM2 14h3v3H2zM13 19h3v3h-3z" fill="#fff"/></svg></button>
                <button class="fly" aria-label="Box"><svg viewBox="0 0 24 24"><path d="M4 7l8-4 8 4v10l-8 5-8-5z" fill="#4468dd" stroke-width="1.5"/><path d="M4 7l8-4 8 4-8 4z" fill="#b7caff"/><path d="M4 7l8 4v11l-8-5z" fill="#6d90f0"/></svg></button>
                <button class="fly" aria-label="Extrude"><svg viewBox="0 0 24 24"><ellipse cx="12" cy="4" rx="6" ry="2.5" fill="#fff"/><path d="M1 10q11 4 21 0v10q-11 4-21 0z" fill="#6d90f0" stroke-width="1.5"/><ellipse cx="12" cy="17" rx="5" ry="2.5" fill="#fff" stroke="#cfdcff"/></svg></button>
                <button aria-label="Trim"><svg viewBox="0 0 24 24"><path d="M1 12h13v5H1z" fill="#fff"/><path d="M12 2h8l-4 15z" fill="#274a9c"/><path d="M14 14l7 6-3 2-6-5z" fill="#fff"/></svg></button>
                <button aria-label="Text"><svg viewBox="0 0 24 24"><path d="M3 3h17l1 6h-2q-1-3-4-3v12q0 2 3 2v2H7v-2q3 0 3-2V6Q6 6 5 9H3z" fill="#4f78e6" stroke="#122a70"/></svg></button>
                <button aria-label="Edit curve"><svg viewBox="0 0 24 24"><path d="M2 4q5-1 9 2" fill="none"/><path d="M9 4q11 4 9 16" fill="none" stroke-width="2.5"/><path d="M7 2h3v3H7zM17 14h3v3h-3z" fill="#fff"/></svg></button>
                <button aria-label="Solid"><svg viewBox="0 0 24 24"><path d="M4 7l8-4 9 3v10l-9 6-8-5z" fill="#5c80e8" stroke-width="1.5"/><path d="M4 7l8 4q1-6 9-5M12 11v11" fill="none"/></svg></button>
            </div>
            <div class="side-col">
                <i class="grip flat"></i>
                <button class="fly" aria-label="Point"><svg viewBox="0 0 24 24"><circle cx="12" cy="12" r="2.5" fill="#fff"/></svg></button>
                <button class="fly" aria-label="Control points"><svg viewBox="0 0 24 24"><path d="M4 6h11q7 1 6 8-2 7-12 6H4" fill="none"/><path d="M2 4h3v3H2zM17 2h3v3h-3zM2 17h3v3H2zM19 19h3v3h-3z" fill="#fff"/></svg></button>
                <button class="fly" aria-label="Ellipse"><svg viewBox="0 0 24 24"><ellipse cx="12" cy="12" rx="10" ry="7" fill="none"/><path d="M12 5v7h10" fill="none"/><path d="M10 3h3v3h-3zM10 10h3v3h-3zM20 10h3v3h-3z" fill="#fff"/></svg></button>
                <button class="fly" aria-label="Rectangle"><svg viewBox="0 0 24 24"><path d="M3 7h17v11H3z" fill="none"/><path d="M2 16h3v3H2zM19 5h3v3h-3z" fill="#fff"/></svg></button>
                <button class="fly" aria-label="Fillet"><svg viewBox="0 0 24 24"><path d="M4 4h17v16" fill="none" stroke="#999"/><path d="M4 4q16 0 16 16" fill="none" stroke-width="2"/><path d="M2 3h3v3H2zM19 18h3v3h-3z" fill="#fff"/></svg></button>
                <button aria-label="Fillet two"><svg viewBox="0 0 24 24"><path d="M2 10Q6 0 15 3q6 4 5 15-4 2-7 0 0-8-11-8z" fill="#7d9cf2" stroke="#345"/><path d="M2 17q3-3 4 0-1 3-4 5h5" fill="none" stroke-width="1.5"/></svg></button>
                <button aria-label="Sweep"><svg viewBox="0 0 24 24"><path d="M4 6q8-4 16 0v14q-4-3-7 1-5-4-9-1z" fill="#4468dd" stroke-width="1.5"/><path d="M11 8v11" stroke="#7d9cf2" stroke-width="3"/><path d="M4 6q4-5 8 0 4-4 8 0-4 3-8 1-4 2-8-1z" fill="#cfdcff"/></svg></button>
                <button class="fly" aria-label="Loft"><svg viewBox="0 0 24 24"><path d="M4 6q9-6 16 0v13q-8-5-16 1z" fill="#4468dd" stroke-width="1.5"/><path d="M4 6q9-6 16 0-7 5-16 0z" fill="#cfdcff"/><path d="M5 18q7-5 14 0v-5H5z" fill="#dfe8ff" stroke="none"/></svg></button>
                <button aria-label="Torus"><svg viewBox="0 0 24 24"><circle cx="12" cy="12" r="6.5" fill="none" stroke="#7d9cf2" stroke-width="5"/><circle cx="11" cy="11" r="7" fill="none" stroke="#b7caff" stroke-width="2"/></svg></button>
                <button class="fly" aria-label="Blend"><svg viewBox="0 0 24 24"><path d="M3 9l7-6q10 1 11 8v9l-7-4q0-7-11-7z" fill="#8fadf5"/><path d="M3 9l7-6 4 2-6 5zM14 15l7-2v9l-7-4z" fill="#fff"/></svg></button>
                <button class="fly" aria-label="Boolean"><svg viewBox="0 0 24 24"><circle cx="16" cy="8" r="7" fill="url(#gBlue)" stroke-width="1.5"/><circle cx="8" cy="15" r="7" fill="url(#gBlue)" stroke-width="1.5"/><path d="M8 8q3 7 0 14M1 14q7 4 14 0M16 1q3 7 1 14M11 8q6 2 12 0" fill="none"/></svg></button>
                <button class="fly" aria-label="Mesh"><svg viewBox="0 0 24 24"><path d="M8 4l14 3-5 14-15-5z" fill="url(#gBlue)"/><path d="M13 5L8 18M18 6l-5 14M6 8l14 5M4 12l14 5" fill="none" stroke-width=".8"/></svg></button>
                <button aria-label="Explode"><svg viewBox="0 0 24 24"><path d="M1 24V7l4 7 1-11 6 10 8-8-3 9 6 1-7 3 6 2-6 2 2 2z" fill="url(#gFire)" stroke="#7a3a00"/></svg></button>
                <button aria-label="Split"><svg viewBox="0 0 24 24"><path d="M2 12h19v5H2z" fill="#fff"/><path d="M12 3h7l-5 14z" fill="#274a9c"/></svg></button>
                <button class="fly" aria-label="Rebuild"><svg viewBox="0 0 24 24"><path d="M1 3h8M10 4l9 9 2 8" fill="none" stroke-dasharray="1 2"/><path d="M2 6q15 0 15 16" fill="none" stroke-width="2"/><path d="M8 2h3v3H8zM20 13h3v3h-3z" fill="#fff"/></svg></button>
            </div>
        </aside>

        <div class="viewports">
            <section class="viewport">
                <svg class="scene">
                    <g transform="translate(-61,-154)">
                        <g id="gridTop"></g>
                        <path d="M107 154v346" stroke="#3f9440" stroke-width="2"/>
                        <path d="M107 499.500h1000" stroke="#a04848"/>
                        <path d="M61 500h380" stroke="#7c22ce" stroke-width="2"/>
                        <path d="M97.5 451v30.500h30" class="axis"/>
                        <text x="99" y="454">y</text><text x="129" y="484">x</text>
                        <g class="wire"><use href="#halfBoard"/><use href="#halfBoard" transform="rotate(180 302 333)"/></g>
                        <path d="M61 161.5h228.500v400M61 211.500h1000M121 339.500h15" fill="none" stroke="#000"/>
                    </g>
                </svg>
                <h2>Top</h2>
            </section>

            <section class="viewport">
                <svg class="scene">
                    <g transform="translate(-545,-154)">
                        <g id="gridPersp"></g>
                        <path d="M545 315L875 195" stroke="#984646" stroke-width="1.5"/>
                        <path d="M875 195L1200 348" stroke="#3f9440" stroke-width="1.5"/>
                        <path d="M628 250L912 153" stroke="#7c22ce"/>
                        <path d="M582.5 456v25M582 481l-17 8M582 481l18 12" class="axis"/>
                        <text x="584" y="457">z</text><text x="560" y="494">x</text><text x="603" y="496">y</text>
                        <g class="solid">
                            <!-- far edge header -->
                            <path d="M833 205l36-12 8 4v14l-6 3-29 7-9-4z" fill="#7330b4"/>
                            <path d="M844 206l28-9v6l-26 10z" fill="#281d36"/><path d="M846 208l4 10M854 205l4 10M861 203l4 10M868 200l4 9" stroke-width="3"/>
                            <!-- pin row along the red axis -->
                            <path d="M756 236l6-4 22 14-1 12-8 1-19-15z" fill="#7330b4"/><path d="M775 247l8-3v11l-7 4z" fill="#281d36"/>
                            <path d="M767 231l6-1 17 10-2 9-7 0-18-13z" fill="#7330b4"/><path d="M776 227l6-3 17 8v12l-7 2-16-13z" fill="#7330b4"/>
                            <path d="M787 223l7-3 15 7v13l-7 1-15-13z" fill="#7330b4"/><path d="M798 218l8-2 15 8-1 8-8 3z" fill="#7330b4"/>
                            <path d="M783 236l3 8M793 233l4 9M804 229l4 9M796 232v12M808 228v11M815 227v6" stroke="#281d36" stroke-width="2"/>
                            <use href="#block" transform="translate(701,265)"/>
                            <use href="#block" transform="translate(723,258) scale(1.25)"/>
                            <use href="#block" transform="translate(740,250)"/>
                            <path d="M634 270l36-13 9 5v22l-8 6-12 2-24-11z" fill="#7330b4"/>
                            <path d="M642 275l34-12v8l-33 14zM671 277l10-4v11l-9 4z" fill="#281d36"/><path d="M643 280l33-12M660 269v10M676 274v12" fill="none"/>

                            <use href="#can" transform="translate(885,214) scale(.8)"/><use href="#can" transform="translate(869,230) scale(.8)"/>
                            <use href="#can" transform="translate(831,234) scale(.8)"/><use href="#can" transform="translate(814,249) scale(.83)"/>
                            <use href="#disc" x="930" y="244"/><use href="#disc" x="968" y="254"/><use href="#disc" x="900" y="257"/><use href="#disc" x="941" y="266"/><use href="#disc" x="872" y="270"/><use href="#disc" x="910" y="281"/>
                            <use href="#torusSmall" x="768" y="284"/><use href="#torusBig" x="717" y="296"/>
                            <use href="#capsule" x="657" y="283"/><use href="#capsule" x="635" y="285"/><use href="#capsule" x="667" y="291"/><use href="#capsule" x="646" y="297"/><use href="#capsule" x="678" y="299"/><use href="#capsule" x="657" y="307"/><use href="#capsule" x="689" y="307"/><use href="#capsule" x="668" y="316"/>
                            <use href="#capsule" x="1003" y="256"/><use href="#capsule" x="988" y="262"/><use href="#capsule" x="1018" y="263"/><use href="#capsule" x="1003" y="270"/><use href="#capsule" x="1033" y="270"/><use href="#capsule" x="1049" y="277"/><use href="#capsule" x="1018" y="278"/><use href="#capsule" x="1033" y="285"/>
                            <use href="#torusBig" x="973" y="294"/><use href="#torusSmall" x="926" y="306"/>
                            <use href="#fin" x="776" y="313"/><use href="#fin" x="736" y="328"/><use href="#fin" x="779" y="341"/><use href="#fin" x="698" y="347"/><use href="#fin" x="738" y="361"/><use href="#fin" x="816" y="325"/>
                            <use href="#can" transform="translate(880,308) scale(.93)"/><use href="#can" transform="translate(864,330)"/><use href="#can" transform="translate(816,336)"/><use href="#can" transform="translate(793,362)"/>

                            <!-- near edge connector and blocks -->
                            <path d="M1018 308l9-7 28-10 12 6 4 8-4 9-32 20-18-12z" fill="#7330b4"/>
                            <path d="M1020 305l16 8 32-16M1036 313v19M1027 301l16 8" fill="none"/>
                            <path d="M1039 316l26-13v13l-26 14z" fill="#281d36"/><path d="M1039 323l26-13M1052 309v14" fill="none"/>
                            <use href="#block" transform="translate(1013,335)"/><use href="#block" transform="translate(989,342) scale(1.4)"/><use href="#block" transform="translate(974,356) scale(1.1)"/>
                            <path d="M917 341l9-4 28 18v10l-9 6-28-17z" fill="#7330b4"/><path d="M917 341l28 17 9-4M922 339l27 17M945 358v12" fill="none"/>
                            <use href="#pin" x="945" y="366"/><use href="#pin" x="930" y="374"/><use href="#pin" x="917" y="382"/><use href="#pin" x="904" y="389"/><use href="#pin" x="892" y="396"/>
                            <path d="M792 440l7-4 9 1 38-22v-5l6-3 12 9v16l-59 32-13-8z" fill="#6a3a9c"/>
                            <path d="M805 449l59-33v14l-59 33z" fill="#281d36"/><path d="M805 449l59-33M805 456l59-33M834 433v14M792 440l13 9v15M846 413l16 6M802 446l45-26" fill="none"/>
                        </g>
                    </g>
                </svg>
                <h2>Perspective</h2>
            </section>

            <section class="viewport">
                <svg class="scene">
                    <g transform="translate(-61,-522)">
                        <path d="M97.5 660v28.500h30" class="axis"/>
                        <text x="99" y="662">z</text><text x="129" y="691">x</text>
                    </g>
                </svg>
                <h2>Front</h2>
            </section>

            <section class="viewport active">
                <svg class="scene">
                    <defs>
                        <g id="halfSide">
                            <path d="M594 617h20v34h-20zM603 617v34" stroke-width="1.5"/>
                            <path d="M594 628l15-3h20l2 4v22h-37z" fill="#7c22ce"/>
                            <path d="M602 633v13M605 633v13M615 634v4M615 642v4M620 634v5" stroke="#b9a3cc" stroke-width=".8"/>
                            <path d="M619 616h33" stroke-width="4"/><path d="M622 617v34M635 617v34M650 617v34M622 627h28M622 632h28M622 639h28M622 650h28" stroke-width="1.5"/>
                            <path d="M658 616h20" stroke-width="4"/><path d="M661 617v20M675 617v20" stroke-width="2"/>
                            <path d="M678.5 606v44M682.5 606v44M748.5 606v44M752.5 606v44" stroke-width="1.5"/>
                            <path d="M679 605.5h73" stroke-width="3"/>
                            <path d="M702 606v22M706 606v22M724 606v22M729 606v22" stroke-width="2.5"/>
                            <path d="M687 616h18M715 616h19" stroke-width="4"/><path d="M690 617v12M701 617v12M719 617v12M731 617v12" stroke-width="2.5"/>
                            <path d="M658 637q1-8 11-13h73l4 4 6 4v11l-4 2h-7l-7 5h-76z" fill="#7c22ce"/>
                            <path d="M666 643h3M671 639v5M675 636v6M667 647v2" stroke="#b9a3cc" stroke-width=".8"/>
                            <path d="M760 626h51v23h-51z" fill="#7c22ce" stroke="none"/>
                            <path d="M772.5 628v19M798.5 628v19" stroke="#b9a3cc" stroke-dasharray="8 2"/>
                        </g>
                    </defs>
                    <g transform="translate(-545,-522)">
                        <g id="gridRight"></g>
                        <path d="M569 522v129" stroke="#3f9440" stroke-width="2"/>
                        <path d="M569 651h700" stroke="#a04848" stroke-width="2"/>
                        <g class="wire">
                            <path d="M579.5 634.5h14v11h-14zM579 640h15M586 634v12M1035 634.500h5v11h-5M1035 640h5" stroke-width="1.5"/>
                            <use href="#halfSide"/><use href="#halfSide" transform="translate(1629,0) scale(-1,1)"/>
                        </g>
                        <path d="M582.5 660v28.500h29" class="axis"/>
                        <text x="584" y="662">z</text><text x="614" y="691">y</text>
                    </g>
                </svg>
                <h2>Right</h2>
            </section>
        </div>

        <aside class="layers">
            <div class="layers-head">
                <h3>Layers - All Layers</h3>
                <i class="dots"></i>
                <button aria-label="Close layers"><svg viewBox="0 0 11 11"><path d="M2 2l7 7M9 2l-7 7" stroke="#fff" stroke-width="1.8"/></svg></button>
            </div>
            <div class="layers-tools">
                <button aria-label="New layer"><svg viewBox="0 0 12 12"><path d="M2 1h5l3 3v7H2zM7 1v3h3" fill="#fff"/></svg></button>
                <button aria-label="New sublayer"><svg viewBox="0 0 12 12"><path d="M1 1h4l2 2v6H1zM4 4h4l3 3v5H4z" fill="#fff"/></svg></button>
                <button aria-label="Delete"><svg viewBox="0 0 12 12"><path d="M2 3l8 7M10 3l-8 7" stroke="#f00000" stroke-width="2"/></svg></button>
                <button aria-label="Move up"><svg viewBox="0 0 12 12"><path d="M1 9l5-5 5 5z" fill="#888" stroke="none"/></svg></button>
                <button aria-label="Move down"><svg viewBox="0 0 12 12"><path d="M1 4l5 5 5-5z" fill="#000" stroke="none"/></svg></button>
                <button aria-label="Move left"><svg viewBox="0 0 12 12"><path d="M8 1L3 6l5 5z" fill="#888" stroke="none"/></svg></button>
                <button aria-label="Filter"><svg viewBox="0 0 12 12"><path d="M1 1h10L7 6v5L5 10V6z" fill="#fff"/></svg></button>
                <button aria-label="Tools"><svg viewBox="0 0 12 12"><path d="M2 11l7-7M5 1h4l3 4" stroke-width="1.5" fill="none"/></svg></button>
            </div>
            <div class="layers-list">
                <table>
                    <thead>
                        <tr><th class="name">Name</th><th></th><th></th><th></th><th></th><th></th></tr>
                    </thead>
                    <tbody>
                        <tr class="selected"><td>Default</td><td></td><td><svg class="bulb on"><use href="#bulb"/></svg></td><td><svg class="lock"><use href="#lock"/></svg></td><td><i class="swatch black"></i></td><td><i class="mat"></i></td></tr>
                        <tr><td>Layer 01</td><td></td><td><svg class="bulb"><use href="#bulb"/></svg></td><td><svg class="lock"><use href="#lock"/></svg></td><td><i class="swatch red"></i></td><td><i class="mat"></i></td></tr>
                        <tr class="current"><td>board</td><td><svg class="check" viewBox="0 0 12 12"><path d="M2 6l3 4 6-7" stroke="#000" stroke-width="2" fill="none"/></svg></td><td></td><td></td><td><i class="swatch purple"></i></td><td></td></tr>
                        <tr><td>Layer 03</td><td></td><td><svg class="bulb"><use href="#bulb"/></svg></td><td><svg class="lock"><use href="#lock"/></svg></td><td><i class="swatch blue"></i></td><td><i class="mat"></i></td></tr>
                        <tr><td>Layer 04</td><td></td><td><svg class="bulb"><use href="#bulb"/></svg></td><td><svg class="lock"><use href="#lock"/></svg></td><td><i class="swatch green"></i></td><td><i class="mat"></i></td></tr>
                        <tr><td>Layer 05</td><td></td><td><svg class="bulb"><use href="#bulb"/></svg></td><td><svg class="lock"><use href="#lock"/></svg></td><td><i class="swatch white"></i></td><td><i class="mat"></i></td></tr>
                        <tr><td>Standard</td><td></td><td><svg class="bulb"><use href="#bulb"/></svg></td><td><svg class="lock"><use href="#lock"/></svg></td><td><i class="swatch black"></i></td><td><i class="mat"></i></td></tr>
                    </tbody>
                </table>
                <div class="hscroll">
                    <button class="sb" aria-label="Scroll left"><svg viewBox="0 0 14 14"><path d="M9 3L5 7l4 4" stroke="#4d6185" stroke-width="2" fill="none"/></svg></button>
                    <i class="hthumb"></i>
                    <button class="sb" aria-label="Scroll right"><svg viewBox="0 0 14 14"><path d="M5 3l4 4-4 4" stroke="#4d6185" stroke-width="2" fill="none"/></svg></button>
                </div>
            </div>
        </aside>
    </main>

    <div class="osnap">
        <i class="grip"></i>
        <label><input type="checkbox" checked disabled>End</label>
        <label><input type="checkbox" checked disabled>Near</label>
        <label><input type="checkbox" checked disabled>Point</label>
        <label><input type="checkbox" checked disabled>Mid</label>
        <label><input type="checkbox" disabled>Cen</label>
        <label><input type="checkbox" disabled>Int</label>
        <label><input type="checkbox" disabled>Perp</label>
        <label><input type="checkbox" disabled>Tan</label>
        <label><input type="checkbox" disabled>Quad</label>
        <label><input type="checkbox" disabled>Knot</label>
        <label><input type="checkbox" class="round" disabled>Project</label>
        <label><input type="checkbox" class="round" disabled>STrack</label>
        <label class="enabled"><input type="checkbox" class="round dark">Disable</label>
    </div>

    <footer class="status">
        <span class="cplane">CPlane</span>
        <span class="coord">x 21.949</span>
        <span class="coord">y 14.271</span>
        <span class="coord">z 0.000</span>
        <span class="coord">0.000</span>
        <span class="layer"><i class="swatch purple"></i>board</span>
        <button class="pane">Snap</button>
        <button class="pane">Ortho</button>
        <button class="pane on">Planar</button>
        <button class="pane">Osnap</button>
        <button class="pane history-pane">Record History</button>
    </footer>

    <div class="taskbar">
        <button class="start"><svg viewBox="0 0 20 20"><path d="M3 4q3-2 6 0l-1 5q-3-2-6 0z" fill="#f0582c"/><path d="M10 4q3 2 7 0l-1 6q-4 2-7 0z" fill="#8cd038"/><path d="M2 10q3-2 6 0l-1 6q-3-2-6 0z" fill="#5a9cf0"/><path d="M9 11q3 2 7 0l-1 5q-4 2-7 0z" fill="#fcd030"/></svg>start</button>
        <div class="quick">
            <a href="#" aria-label="Pidgin"><svg viewBox="0 0 16 16"><path d="M2 15V7q0-6 6-6t6 6v8z" fill="#8a6ea6"/><ellipse cx="8" cy="11" rx="4" ry="4" fill="#ddd"/><path d="M5 5h5l-3 4z" fill="#f0a020"/><circle cx="10" cy="5" r="1" fill="#fff"/></svg></a>
            <a href="#" aria-label="Firefox"><svg><use href="#firefox"/></svg></a>
            <a href="#" aria-label="Show desktop"><svg viewBox="0 0 16 16"><path d="M2 3h11v12H2z" fill="#e6f2ff" stroke="#3a7cc8"/><path d="M5 8q3-4 5 0t-4 4" stroke="#2a7ad8" stroke-width="2" fill="none"/><path d="M8 10l6-9" stroke="#fff" stroke-width="2"/></svg></a>
            <span class="more">»</span>
        </div>
        <button class="task"><svg><use href="#firefox"/></svg>Phoenix Gold Phorum ...</button>
        <button class="task pressed"><svg><use href="#rhino"/></svg>zpa - Rhinoceros (Cor...</button>
        <div class="tray">
            <button class="expand" aria-label="Show hidden icons"><svg viewBox="0 0 16 16"><path d="M10 4L6 8l4 4" stroke="#fff" stroke-width="2" fill="none"/></svg></button>
            <svg viewBox="0 0 16 16"><path d="M1 3h9v7H1zM4 11h4v3H3z" fill="#1b2a5c" stroke="#9ab"/><path d="M12 3q2 3 0 6M14 2q3 4 0 8" stroke="#fff" fill="none"/></svg>
            <svg viewBox="0 0 16 16"><path d="M1 1h9v9H6l-2 3V10H1z" fill="#f4f4f4" stroke="#888"/><circle cx="11" cy="11" r="4.5" fill="#7cc85a" stroke="#3c8a2a"/></svg>
            <svg viewBox="0 0 16 16"><circle cx="6" cy="6" r="5" fill="#9edc2a"/><circle cx="10" cy="10" r="5" fill="#7cc41c"/><circle cx="8" cy="8" r="5" fill="#a4e03c"/><path d="M5 8l2 2 4-4" stroke="#fff" stroke-width="2" fill="none"/></svg>
            <svg viewBox="0 0 16 16"><path d="M0 1h16v14H0z" fill="#14806c"/><path d="M0 4h16M0 12h16" stroke="#7cc"/><circle cx="6" cy="8" r="2" fill="none" stroke="#fff"/><path d="M9 8h5" stroke="#fff"/></svg>
            <svg viewBox="0 0 16 16"><ellipse cx="7" cy="7" rx="6" ry="6" fill="#777"/><ellipse cx="6" cy="7" rx="3" ry="4" fill="#bbb" stroke="#222"/><path d="M14 9l-4 6" stroke="#8af" stroke-width="2"/></svg>
            <svg viewBox="0 0 16 16"><path d="M1 1h14v11H1z" fill="#8c8c8c" stroke="#333"/><path d="M1 14h5M9 14h5" stroke="#333" stroke-width="2"/></svg>
            <svg viewBox="0 0 16 16"><path d="M1 6q7-7 14 0M4 9q4-4 8 0" stroke="#111" stroke-width="4" fill="none"/><path d="M1 6q7-7 14 0M4 9q4-4 8 0" stroke="#fff" stroke-width="2" fill="none"/><path d="M6 11h4v4H6z" fill="#fff" stroke="#111"/></svg>
            <span class="clock">10:46 AM</span>
        </div>
    </div>

    <script src="grid.js"></script>
</body>
</html>
```
FILE: styles.css
```css
* {
    margin: 0;
    padding: 0;
    box-sizing: border-box;
}

body {
    font-family: Tahoma, "DejaVu Sans Condensed", "Liberation Sans", sans-serif;
    font-size: 11px;
    color: #000;
    background: #ece9d8;
    display: flex;
    flex-direction: column;
    height: 100vh;
    overflow: hidden;
}

button {
    font: inherit;
    border: none;
    background: none;
}

a {
    color: inherit;
    text-decoration: none;
}

.defs {
    position: absolute;
}

/* title bar */
.title-bar {
    display: flex;
    align-items: center;
    gap: 2px;
    height: 26px;
    flex-shrink: 0;
    padding: 0 2px;
    background: linear-gradient(#3f95ff 0, #0a63ee 3px, #0054e3 8px, #0058ee 16px, #0066ff 22px, #0040c8 26px);
}

.title-bar h1 {
    flex: 1;
    margin-left: 2px;
    font-family: "Liberation Sans", sans-serif;
    font-size: 13px;
    font-weight: bold;
    color: #fff;
    text-shadow: 1px 1px #0a1883;
}

.app-icon {
    width: 16px;
    height: 16px;
}

.win-btn {
    width: 21px;
    height: 21px;
    border: 1px solid #fff;
    border-radius: 3px;
    background: linear-gradient(135deg, #7aa2f8, #2a5fe0 50%, #1c49c4);
}

.win-btn svg {
    display: block;
    width: 19px;
    height: 19px;
}

.win-btn.close {
    background: linear-gradient(135deg, #f0a088, #e0512c 50%, #b83210);
}

/* menu */
.menu-bar {
    display: flex;
    gap: 11px;
    height: 21px;
    flex-shrink: 0;
    padding: 0 5px;
    line-height: 18px;
    border-bottom: 1px solid #aca899;
}

/* command area */
.command {
    display: flex;
    height: 46px;
    flex-shrink: 0;
    padding: 3px 2px 7px 0;
    background: #fff;
    border-bottom: 1px solid #aca899;
    box-shadow: inset 0 -8px #f3f2ee;
    font-family: "Liberation Sans", sans-serif;
    font-size: 12px;
}

.grip {
    flex: none;
    width: 8px;
    background: radial-gradient(circle, #aaa79b 1px, transparent 1px) 3px 0 / 4px 4px repeat-y;
}

.grip.flat {
    display: block;
    width: auto;
    height: 6px;
    margin: 0 6px;
    background: radial-gradient(circle, #aaa79b 1px, transparent 1px) 0 2px / 4px 4px repeat-x;
}

.command-lines {
    flex: 1;
}

.history {
    display: flex;
    justify-content: space-between;
    height: 17px;
    line-height: 16px;
    border-bottom: 1px solid #000;
}

.spin {
    display: flex;
    flex-direction: column;
    gap: 1px;
    width: 15px;
}

.spin button {
    height: 7px;
    background: #c6d5fd;
    border-radius: 1px;
}

.spin svg {
    display: block;
    width: 15px;
    height: 6px;
}

.prompt {
    display: flex;
    gap: 2px;
    height: 19px;
    padding-top: 1px;
}

.prompt label {
    font-weight: bold;
    line-height: 15px;
}

.prompt input {
    flex: 1;
    border: none;
    outline: none;
    font: inherit;
}

.sb {
    width: 15px;
    height: 15px;
    background: linear-gradient(#dbe6fe, #b6c8f8);
    border: 1px solid #c3d0f4;
    border-radius: 2px;
}

.sb svg {
    display: block;
    width: 13px;
    height: 13px;
}

.thumb {
    width: 7px;
    height: 15px;
    margin-right: 3px;
    background: #c8d6fb;
    border: 1px solid #aebfee;
    border-radius: 2px;
}

.corner {
    width: 15px;
    background: #ece9d8;
}

/* toolbars */
.toolbars {
    flex-shrink: 0;
}

.bar {
    display: flex;
    height: 29px;
    margin-bottom: 1px;
}

.tools {
    display: flex;
    padding-right: 1px;
    background: linear-gradient(#f8f7f4, #f0efe9);
    border-right: 1px solid #aca899;
    border-bottom: 1px solid #c5c2b4;
}

.bar .grip {
    width: 6px;
    margin: 5px 0;
}

.tools button, .side-col button {
    width: 28px;
    height: 28px;
    flex: none;
    display: flex;
    align-items: center;
    justify-content: center;
    stroke: #000;
}

.tools svg {
    width: 24px;
    height: 24px;
}

.side-col svg {
    width: 22px;
    height: 22px;
}

.fly {
    background: linear-gradient(135deg, transparent 45%, #999 45%, #999 56%, transparent 56%) no-repeat right 1px bottom 2px / 6px 6px;
}

.tinted svg {
    background: #e0dee0;
}

.gray svg {
    background: #d4d0c8;
}

.tools.gray button {
    stroke: #444;
}

.lone {
    margin-left: 19px;
    border-left: 1px solid #aca899;
}

.lone svg {
    background: #b8b8b8;
}

/* workspace */
.workspace {
    display: flex;
    flex: 1;
    min-height: 0;
}

.side-tools {
    display: flex;
    align-items: flex-start;
    width: 60px;
    flex: none;
    padding-right: 1px;
}

.side-col {
    width: 30px;
    background: #f5f4f0;
    border-right: 1px solid #c5c2b4;
    border-bottom: 1px solid #aca899;
}

.viewports {
    flex: 1;
    display: grid;
    grid-template-columns: 481fr 568fr;
    grid-template-rows: 365fr 205fr;
    gap: 3px;
    min-width: 0;
}

.viewport {
    position: relative;
    overflow: hidden;
    background: #9e9e9e;
    border: 1px solid #716f64;
    border-right-color: #fff;
    border-bottom-color: #fff;
}

/* the view title lies over the drawing */
.viewport h2 {
    position: absolute;
    top: 0;
    left: 0;
    padding: 0 8px;
    font-family: "Liberation Sans", sans-serif;
    font-size: 13px;
    line-height: 18px;
    color: #e2eafb;
    background: #7a96df;
}

.viewport.active h2 {
    color: #fff;
    background: #0054e3;
}

.scene {
    display: block;
    width: 100%;
    height: 100%;
}

.scene text {
    font-family: "Liberation Mono", monospace;
    font-size: 13px;
    font-weight: bold;
    fill: #5c5c5c;
}

.axis {
    fill: none;
    stroke: #5c5c5c;
}

.minor {
    fill: none;
    stroke: #979797;
}

.major {
    fill: none;
    stroke: #898989;
}

.wire {
    fill: none;
    stroke: #7c22ce;
}

.thin {
    stroke-width: 1px;
}

.solid {
    stroke: #7c22ce;
}

/* layers panel */
.layers {
    display: flex;
    flex-direction: column;
    width: 168px;
    flex: none;
    margin-top: 2px;
    padding-left: 8px;
    border-left: 2px solid #fff;
    background: #f3f2ea;
    overflow: hidden;
}

.layers-head {
    display: flex;
    align-items: center;
    gap: 6px;
    height: 14px;
}

.layers-head h3 {
    font-size: 11px;
    font-weight: normal;
    white-space: nowrap;
    padding-left: 2px;
}

.dots {
    flex: 1;
    height: 6px;
    background: radial-gradient(circle, #999 1px, transparent 1px) 0 0 / 4px 3px;
}

.layers-head button {
    width: 11px;
    height: 11px;
    background: #e04a34;
    border-radius: 1px;
}

.layers-head svg {
    display: block;
}

.layers-tools {
    display: flex;
    gap: 9px;
    padding: 6px 4px 7px;
    background: #ece9d8;
    stroke: #000;
}

.layers-tools button {
    width: 12px;
    height: 12px;
    flex: none;
}

.layers-tools svg {
    display: block;
    width: 12px;
    height: 12px;
}

.layers-list {
    flex: 1;
    display: flex;
    flex-direction: column;
    justify-content: space-between;
    border: 1px solid #7f9db9;
    background: #fff;
    overflow: hidden;
}

.layers-list table {
    width: 164px;
    table-layout: fixed;
    border-collapse: collapse;
}

.layers-list th {
    height: 21px;
    width: 17px;
    font-weight: normal;
    text-align: left;
    background: linear-gradient(#ece9d8 18px, #cbc7b8);
    border-right: 1px solid #c7c5b2;
}

.layers-list th.name {
    width: 79px;
    padding-left: 10px;
}

.layers-list td {
    height: 15px;
    line-height: 13px;
    border-bottom: 1px dotted #ddd;
    white-space: nowrap;
}

.layers-list td:first-child {
    padding-left: 9px;
}

.layers-list td svg {
    display: block;
    width: 12px;
    height: 13px;
    margin: 0 auto;
}

.bulb {
    fill: #ffff80;
    color: #6d6a00;
}

.bulb.on {
    fill: #3aa0f0;
    color: #bfe0ff;
}

.selected {
    background: #316ac5;
    color: #fff;
}

.current {
    background: #f0f0f0;
    font-weight: bold;
}

.swatch {
    display: block;
    width: 11px;
    height: 11px;
    margin: 0 auto;
    border: 1px solid #000;
}

.selected .swatch {
    border-color: #fff;
}

.black {
    background: #000;
}

.red {
    background: #f00;
}

.purple {
    background: #7c22ce;
}

.blue {
    background: #00f;
}

.green {
    background: #008000;
}

.white {
    background: #fff;
}

.mat {
    display: block;
    width: 11px;
    height: 11px;
    margin-left: 4px;
    border: 1px solid #ddd;
    border-radius: 50%;
    background: #fff;
}

.hscroll {
    display: flex;
    padding: 1px 2px;
    height: 17px;
    background: #f4f3ee;
}

.hscroll .sb:last-child {
    margin-left: auto;
}

.hthumb {
    width: 43px;
    height: 15px;
    margin-left: 1px;
    border: 1px solid #98b0ec;
    border-radius: 2px;
    background: repeating-linear-gradient(90deg, #8fa9ea 0, #8fa9ea 1px, transparent 1px, transparent 2px) center / 8px 6px no-repeat, #c6d5fd;
}

/* object snaps */
.osnap {
    display: flex;
    height: 24px;
    flex-shrink: 0;
    padding: 1px 0;
    border-top: 1px solid #fff;
    border-bottom: 1px solid #aca899;
}

.osnap .grip {
    width: 10px;
    margin: 3px 0;
}

.osnap label {
    display: flex;
    align-items: center;
    gap: 4px;
    width: 54px;
    color: #aca899;
}

.osnap label.enabled {
    width: 60px;
    color: #000;
    border-right: 1px solid #c5c2b4;
}

.osnap input {
    appearance: none;
    flex: none;
    width: 13px;
    height: 13px;
    border: 1px solid #cac8bb;
    background: #fff;
}

.osnap input:checked::before {
    content: "✓";
    display: block;
    font: bold 11px/11px "DejaVu Sans", sans-serif;
    text-align: center;
    color: #aca899;
}

.osnap input.round {
    border-radius: 3px;
    background: #f3f2ea;
}

.osnap input.dark {
    background: #08407c;
    border: 1px solid #08244c;
    box-shadow: inset 0 0 0 1px #a8c4e0;
}

/* status bar */
.status {
    display: flex;
    align-items: center;
    height: 20px;
    flex-shrink: 0;
    border-top: 1px solid #fff;
}

.cplane {
    width: 60px;
    padding-left: 10px;
}

.coord {
    width: 88px;
}

.layer {
    display: flex;
    align-items: center;
    gap: 1px;
    width: 169px;
    padding-left: 1px;
}

.layer .swatch {
    margin: 0;
    width: 12px;
    height: 12px;
}

.pane {
    width: 48px;
    height: 16px;
    border-left: 1px solid #fff;
}

.pane.on {
    background: #f8f7f2;
    font-weight: bold;
}

.history-pane {
    width: 110px;
    border-right: 1px solid #fff;
}

/* taskbar */
.taskbar {
    display: flex;
    height: 30px;
    flex-shrink: 0;
    color: #fff;
    background: linear-gradient(#3a80f0 0, #245edc 4px, #2258d6 24px, #1941a5 30px);
}

.start {
    display: flex;
    align-items: center;
    gap: 2px;
    width: 97px;
    padding-left: 10px;
    font: italic bold 17px "Liberation Sans", sans-serif;
    color: #fff;
    text-shadow: 1px 1px 2px #143c14;
    border-radius: 0 10px 10px 0;
    background: linear-gradient(#5cb85c 0, #3c9a3c 5px, #38913a 22px, #2a722c 30px);
}

.start svg {
    width: 21px;
    height: 21px;
}

.quick {
    display: flex;
    align-items: center;
    gap: 8px;
    width: 101px;
    padding-left: 11px;
}

.quick svg, .task svg {
    display: block;
    width: 16px;
    height: 16px;
    flex: none;
}

.more {
    align-self: flex-start;
    margin-top: 1px;
    margin-left: 2px;
    font-size: 13px;
}

.task {
    display: flex;
    align-items: center;
    gap: 4px;
    width: 159px;
    height: 25px;
    margin: 3px 1px 2px 0;
    padding-left: 9px;
    color: #fff;
    white-space: nowrap;
    border-radius: 3px;
    background: linear-gradient(#5a98fa, #3c81f0 5px, #3a7cee);
}

.task.pressed {
    background: #1e52b7;
    box-shadow: inset 1px 1px 2px #143a8c;
}

.tray {
    display: flex;
    align-items: center;
    gap: 2px;
    margin-left: auto;
    padding-right: 14px;
    border-left: 1px solid #0c3f9c;
    background: linear-gradient(#30b8fa 0, #149aee 4px, #1290e8 24px, #0c68c0 30px);
}

.tray svg {
    width: 16px;
    height: 16px;
}

.expand {
    width: 16px;
    height: 16px;
    margin-left: -8px;
    border-radius: 50%;
    background: #2f7cf0;
    box-shadow: 0 0 0 1px #8cc4ff;
}

.expand svg {
    display: block;
}

.clock {
    margin-left: 4px;
}
```
FILE: grid.js
```js
const SVG = "http://www.w3.org/2000/svg";

function addPath(id, cls, d) {
    const path = document.createElementNS(SVG, "path");
    path.setAttribute("class", cls);
    path.setAttribute("d", d);
    document.getElementById(id).appendChild(path);
}

// flat construction grid, every fifth line is a major one
function flatGrid(id, ox, oy, step) {
    let minor = "", major = "";
    for (let i = -150; i <= 250; i++) {
        const x = Math.round(ox + i * step) + 0.5;
        const y = Math.round(oy - i * step) + 0.5;
        const d = `M${x} 0v1600M0 ${y}h2600`;
        if (i % 5 === 0) major += d; else minor += d;
    }
    addPath(id, "minor", minor);
    addPath(id, "major", major);
}

// ground plane: u runs along the red axis, v along the green one
function project(u, v) {
    const t = 0.00053 * u;
    const s = 0.00059 * v;
    const w = 1 - t - s;
    return [
        ((875 - 1923 * t - 64 * s) / w).toFixed(1),
        ((195 + 186 * (t + s)) / w).toFixed(1)
    ];
}

function perspectiveGrid(id, step) {
    let minor = "", major = "";
    for (let i = -130; i <= 165; i++) {
        const k = i * step;
        const d = `M${project(k, -480)}L${project(k, 610)}M${project(-480, k)}L${project(610, k)}`;
        if (i % 5 === 0) major += d; else minor += d;
    }
    addPath(id, "minor", minor);
    addPath(id, "major", major);
}

flatGrid("gridTop", 107, 499, 3.68);
flatGrid("gridRight", 569, 651, 5.4);
perspectiveGrid("gridPersp", 3.68);
```
